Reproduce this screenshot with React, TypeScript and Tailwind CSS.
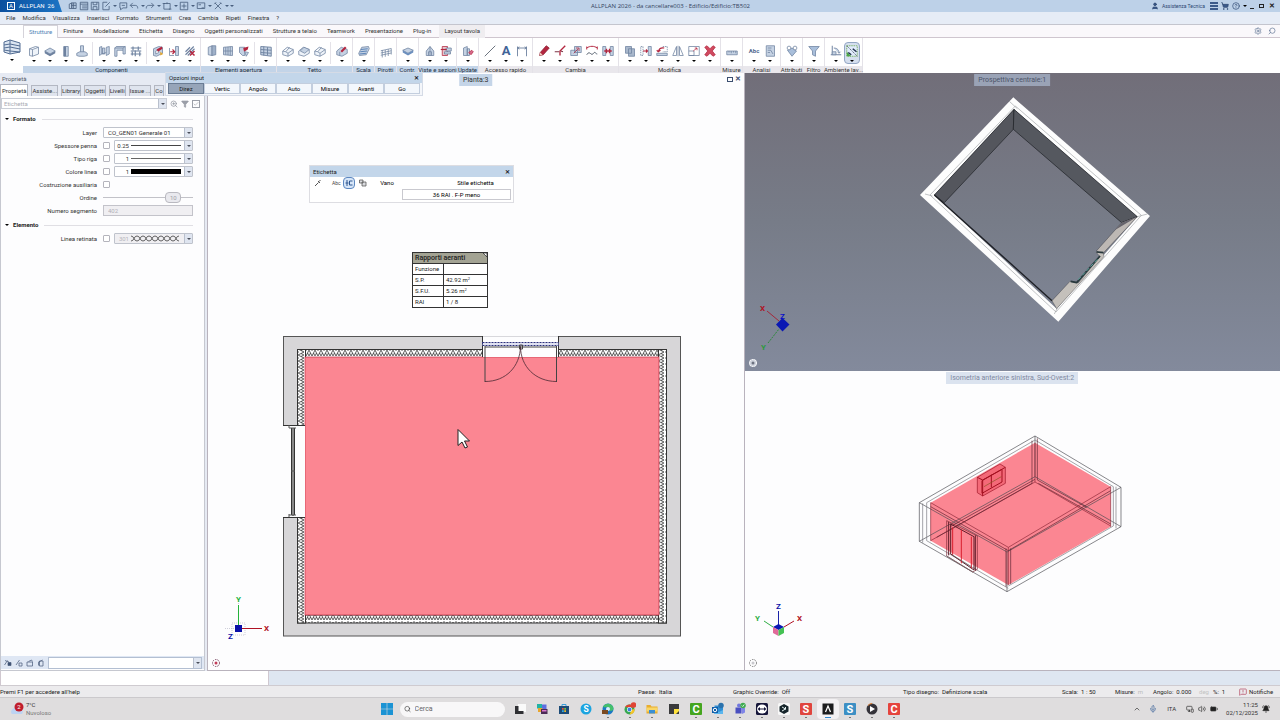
import type { ReactNode } from 'react';
import { useState } from 'react';
import { Search, Settings, Filter, ZoomIn, ShoppingCart, User, CircleHelp, ChevronUp, Mic, Volume2, MonitorSmartphone, BatteryMedium, BellRing, Check, MessageSquareWarning } from 'lucide-react';

const S = '#6d819f';
const L = '#c5d2e3';
const R = '#b3263f';

// 16x16 ribbon glyphs
const glyphs: Record<string, ReactNode> = {
    wall: <path d="M2 5l8-3 4 1v9l-8 3-4-1zM2 5l4 1 8-3M6 6v9" fill="#eef3f9" stroke={S} />,
    slab: (
        <>
            <path d="M1 8l7-4 7 4-7 4z" fill={L} stroke={S} />
            <path d="M1 8v3l7 4 7-4V8l-7 4z" fill={S} />
        </>
    ),
    column: (
        <>
            <path d="M5 2h6v13H5z" fill={L} stroke={S} />
            <path d="M5 2h3v13H5z" fill={S} />
        </>
    ),
    footing: (
        <>
            <path d="M6 1h4v9H6z" fill={L} stroke={S} />
            <path d="M1 11l4-2h7l3 2v3l-4 1H4l-3-1z" fill={L} stroke={S} />
        </>
    ),
    walls: (
        <>
            <path d="M2 3l3-1v10l-3 2zM6 4h3v8H6zM11 3l4-1v10l-4 2z" fill={L} stroke={S} />
            <path d="M5 12l6-2" stroke={S} />
        </>
    ),
    beam: <path d="M1 4l2-2h12v10h-3V7H4v8H1zM1 4h11v3M12 4l3-2" fill={L} stroke={S} />,
    grid: <path d="M1 4h14M1 8h14M1 12h14M4 2v5M11 2v5M7 7v8M13 9v6M3 9v5" stroke={S} strokeWidth="1.5" fill="none" />,
    opening: (
        <>
            <path d="M2 5l7-3 5 1v8l-8 4-4-1z" fill={L} stroke={S} />
            <path d="M5 8l4-2v4l-4 2z" fill="#fff" stroke={S} />
            <path d="M6 6l7-4 1 3-6 4z" fill={R} />
            <path d="M11 9l4 3-4 2z" fill="#e3a72f" />
        </>
    ),
    join: (
        <>
            <path d="M10 2h4v12h-4z" fill={L} stroke={S} />
            <path d="M2 4v10M2 14h6" stroke={S} fill="none" />
            <path d="M3 9h6M6 6l3 3-3 3" stroke={R} strokeWidth="1.5" fill="none" />
        </>
    ),
    unjoin: (
        <>
            <path d="M2 13L13 2M5 14l9-9M2 9l6-6" stroke={S} strokeWidth="1.5" />
            <path d="M8 8l6 6M14 8l-6 6" stroke={R} strokeWidth="2" />
        </>
    ),
    door: (
        <>
            <path d="M3 3l5-2v13l-5-1z" fill={L} stroke={S} />
            <path d="M8 1h5v12l-5 1z" fill="#9fb1c9" stroke={S} />
        </>
    ),
    window: <path d="M2 3l12-1v12L2 13zM8 2.500v11M2 8h12M5 3v10M11 2v12" fill={L} stroke={S} />,
    skylight: (
        <>
            <path d="M2 3h7v11H6L2 10z" fill={L} stroke={S} />
            <path d="M7 4l7-2-1 4-5 3z" fill={R} />
            <path d="M9 9l5 1-3 5z" fill={L} stroke={S} />
        </>
    ),
    facade: <path d="M1 2l14 1v12L1 13zM5 2v12M10 3v11M1 6l14 1M1 10l14 1" fill={L} stroke={S} strokeWidth="1.200" />,
    roof: <path d="M1 8l6-5 8 3v5l-7 4-7-2zM1 8l4 1 5-6M5 9l3 2v4M8 11l7-5" fill="#eef3f9" stroke={S} />,
    roofFill: (
        <>
            <path d="M1 8l6-5 8 3v5l-7 4-7-2z" fill="#eef3f9" stroke={S} />
            <path d="M3 8l5-5 7 3-6 5z" fill={L} stroke={S} />
        </>
    ),
    roofEdit: (
        <>
            <path d="M1 8l6-5 8 3v5l-7 4-7-2zM5 9v5" fill={L} stroke={S} />
            <path d="M6 8l6-6 2 2-6 6z" fill={R} />
        </>
    ),
    stair: (
        <>
            <path d="M5 3l9-1 1 3-4 8-9 1-1-3z" fill={L} stroke={S} />
            <path d="M4 6l9-1M3 9l9-1M2 12l9-1" stroke="#5e86b8" strokeWidth="1.500" />
        </>
    ),
    railing: <path d="M1 5l14-3M1 8l14-3M1 11l14-3M3 4v10M7 4v9M11 3v9M15 2v8" stroke={S} fill="none" />,
    solid: (
        <>
            <path d="M1 7l7-3 7 3-7 4z" fill={L} stroke={S} />
            <path d="M1 7v3l7 4 7-4V7l-7 4z" fill="#6c8fbe" />
        </>
    ),
    view: (
        <>
            <path d="M3 8l5-6 5 6v6H3z" fill={L} stroke={S} />
            <path d="M8 2v12M6 14V9h4v5" stroke={S} fill="none" />
        </>
    ),
    section: (
        <>
            <path d="M3 2h7v12H3z" fill="#e6c4cb" stroke={R} />
            <path d="M8 4h7v4H8zM6 9h8v3H6z" fill={L} stroke={S} />
            <path d="M1 6h8" stroke={R} strokeWidth="1.500" />
        </>
    ),
    update: (
        <>
            <path d="M2 4l5-2v12H2zM7 5h3v9H7z" fill={L} stroke={S} />
            <path d="M9 10l4-3 2 2-3 4z" fill="#d4688b" stroke={R} />
        </>
    ),
    line: <path d="M1 15L15 1" stroke="#5c6572" strokeWidth="1.200" />,
    dimension: <path d="M2 2v13M14 2v13M2 4h12M4.500 2.500L2 4l2.500 1.500M11.500 2.500L14 4l-2.500 1.500" stroke={S} fill="none" strokeWidth="1.200" />,
    pencil: (
        <>
            <path d="M3 10l8-9 4 3-8 9-5 1z" fill={R} stroke="#8a1c30" />
            <path d="M2 14l1-4 3 3z" fill="#f0d2c0" />
        </>
    ),
    trim: (
        <>
            <path d="M15 1L8 8v6" stroke={R} strokeWidth="1.800" fill="none" />
            <path d="M1 9h6M9 8l3 1" stroke="#7d3446" strokeWidth="1.500" />
        </>
    ),
    stretch: (
        <>
            <path d="M1 7h9v7H1zM6 2h9v8H6z" fill={L} stroke={S} />
            <path d="M5 11l6-6M8 4h4v4" stroke={R} fill="none" />
        </>
    ),
    curve: (
        <>
            <path d="M1 4c4-3 10-3 14 0M1 2v4M15 2v4" stroke={R} fill="none" strokeWidth="1.300" />
            <path d="M1 13c4-7 6 3 9-2 2-3 3 1 5 1" stroke="#4f5967" fill="none" strokeWidth="1.300" />
        </>
    ),
    merge: (
        <>
            <path d="M1 2h4v12H1zM11 2h4v12h-4z" fill={L} stroke={S} />
            <path d="M3 8h10M6 5v6M10 5v6" stroke={R} strokeWidth="1.800" />
        </>
    ),
    copy: <path d="M2 2h8v9H2zM6 5h8v10H6z" fill="#a9b8cc" stroke={S} />,
    move: (
        <>
            <path d="M1 2h3v12H1z" fill="none" stroke={S} strokeDasharray="2 1" />
            <path d="M11 2h4v12h-4z" fill={L} stroke={S} />
            <path d="M4 8h6M8 6l2 2-2 2" stroke={R} strokeWidth="1.500" fill="none" />
        </>
    ),
    rotate: (
        <>
            <path d="M1 11h14v3H1z" fill={L} stroke={S} />
            <path d="M9 2h6v7H9" fill="none" stroke={S} strokeDasharray="2 1" />
            <path d="M11 4C6 3 4 5 3 9M1 7l2 2 3-2" stroke={R} strokeWidth="1.500" fill="none" />
        </>
    ),
    mirror: <path d="M6 2v12H1zM10 2v12h5zM8 1v14" fill="none" stroke={S} />,
    scale: (
        <>
            <path d="M1 2h14v12H1zM1 8h7v6H1" fill="#fff" stroke={S} />
            <path d="M7 8l5-4M9 4h3v3" stroke={R} fill="none" />
        </>
    ),
    delete: <path d="M1 3l3-2 4 4 4-4 3 2-4 5 4 5-3 2-4-4-4 4-3-2 4-5z" fill="#d04a5f" stroke={R} />,
    ruler: <path d="M1 8h14v5H1zM4 8v2M7 8v3M10 8v2M13 8v3" fill={L} stroke={S} />,
    report: (
        <>
            <path d="M3 1h11v14H3z" fill={L} stroke={S} />
            <path d="M5 4h5M5 7h4l3 5M5 10h3" stroke={S} fill="none" />
        </>
    ),
    attributes: (
        <>
            <path d="M2 7l6-3 6 4-6 7z" fill="#a9bfdb" stroke={S} />
            <circle cx="4" cy="4" r="2.500" fill="#fff" stroke={S} />
            <circle cx="12" cy="4" r="2.500" fill="#fff" stroke={S} />
        </>
    ),
    filter: <path d="M1 2h14L10 8v7l-4-2V8z" fill="#a9bfdb" stroke={S} />,
    plane: (
        <>
            <path d="M3 1v12h12M3 13h-2" stroke={S} fill="none" strokeWidth="1.300" />
            <path d="M5 4c5 0 7 3 7 7M10 9l2 2 2-2M3 13h5V9H3z" stroke={S} fill={L} />
        </>
    ),
    xray: (
        <>
            <path d="M1 1h14v14H1z" fill="#dfeafb" stroke="#68a84a" strokeDasharray="2 1" />
            <path d="M1 1l14 14" stroke="#3c4656" strokeDasharray="2 1" />
            <path d="M1 9l6 6H1z" fill="#4ba546" />
            <path d="M9 5l5 4M3 10l4 3" stroke="#22324e" strokeWidth="2" />
        </>
    ),
};

function Glyph({ name, className = 'h-3 w-3.5' }: { name: string; className?: string }) {
    if (name === 'text') return <span className="h-3 text-[13px] leading-3 font-bold text-[#3f6498]">A</span>;
    if (name === 'abc') return <span className="h-3 text-[6px] leading-3 font-bold text-[#51698f]">Abc</span>;
    return (
        <svg viewBox="0 0 16 16" fill="none" className={className}>
            {glyphs[name]}
        </svg>
    );
}

function Caret({ className = 'fill-black' }: { className?: string }) {
    return (
        <svg viewBox="0 0 4 2" className={`h-[2px] w-1 shrink-0 ${className}`}>
            <path d="M0 0h4L2 2z" />
        </svg>
    );
}

type Group = { label: string; blue?: boolean; noCaret?: boolean; tools: string[] };

const groups: Group[] = [
    { label: 'Componenti', blue: true, tools: ['wall', 'slab', 'column', 'footing', '|', 'walls', 'beam', 'grid', '|', 'opening', 'join', 'unjoin'] },
    { label: 'Elementi apertura', blue: true, tools: ['door', 'window', 'skylight', '|', 'facade'] },
    { label: 'Tetto', blue: true, tools: ['roof', 'roofFill', 'roof', '|', 'roofEdit'] },
    { label: 'Scala', blue: true, tools: ['stair'] },
    { label: 'Pirotti', blue: true, noCaret: true, tools: ['railing'] },
    { label: 'Contr.', blue: true, tools: ['solid'] },
    { label: 'Viste e sezioni', blue: true, tools: ['view', 'section'] },
    { label: 'Update', blue: true, tools: ['update'] },
    { label: 'Accesso rapido', tools: ['line', 'text', 'dimension'] },
    { label: 'Cambia', tools: ['pencil', 'trim', 'stretch', 'curve', 'merge'] },
    { label: 'Modifica', tools: ['copy', 'move', 'rotate', 'mirror', 'scale', 'delete'] },
    { label: 'Misure', tools: ['ruler'] },
    { label: 'Analisi', tools: ['abc', 'report'] },
    { label: 'Attributi', tools: ['attributes'] },
    { label: 'Filtro', tools: ['filter'] },
    { label: 'Ambiente lav...', tools: ['plane', 'xray'] },
];

const quickIcons: { d: string; caret?: boolean }[] = [
    { d: 'M2 5l4-2v9H2zM6 3h7v9H6zM9 3v9M6 7h7' },
    { d: 'M2 2h12v12H2zM2 5h12M5 8h8M5 11h8' },
    { d: 'M2 2h12v12H2zM5 2v4h6V2M5 14V9h6v5' },
    { d: 'M10 2H3v12h10V8M7 9l7-7', caret: true },
    { d: 'M3 3h11v8H8l-4 3v-3H3zM6 7h5' },
    { d: 'M6 3L2 7l4 4M2 7h8c3 0 4 2 4 5', caret: true },
    { d: 'M10 3l4 4-4 4M14 7H6c-3 0-4 2-4 5', caret: true },
    { d: 'M3 4h10v9H3zM1 4h4M11 13h4M8 2v3', caret: true },
    { d: 'M2 2h12v12H2zM8 4v8M4 8h8', caret: true },
    { d: 'M2 3h12v9H2zM4 6h4M9 11h4', caret: true },
    { d: 'M3 3l10 10M13 3L3 13M2 5l3-3M11 2l3 3', caret: true },
];

function TitleBar() {
    return (
        <header className="flex h-3 items-center bg-[#bdd1e8]">
            <div className="flex h-3 w-[62px] items-center gap-1 bg-gradient-to-r from-[#0b4f9e] to-[#1c74c4] pl-[7px] leading-3 text-white [clip-path:polygon(0_0,58px_0,100%_100%,0_100%)]">
                <span className="flex h-2 w-2 items-center justify-center border border-white text-[6px] leading-none">A</span>
                <span>ALLPLAN&nbsp; 26</span>
            </div>
            <div className="ml-1.5 flex w-[166px] items-center justify-between">
                {quickIcons.map((icon, i) => (
                    <button key={i} aria-label={`Comando rapido ${i + 1}`} className="flex items-center gap-0.5">
                        <svg viewBox="0 0 16 16" fill="none" stroke="#4a607f" strokeWidth="1.300" className="h-2.5 w-2.5">
                            <path d={icon.d} />
                        </svg>
                        {icon.caret && <Caret className="fill-[#4a607f]" />}
                    </button>
                ))}
                <Caret className="fill-[#4a607f]" />
            </div>
            <h1 className="flex-1 pr-11 text-center font-['Open_Sans',sans-serif] text-[#33435c]">ALLPLAN 2026 - da cancellare003 - Edificio/Edificio:TB502</h1>
            <div className="flex w-[129px] items-center gap-[3px] whitespace-nowrap text-[#2c4570]">
                <User className="h-2 w-2 shrink-0 fill-[#3c5a8a]" />
                <span className="w-[45px] text-[5px]">Assistenza Tecnica</span>
                <svg viewBox="0 0 8 8" className="h-2 w-2 shrink-0 fill-[#3c5a8a]">
                    <path d="M0 0h8v2H0zM0 3h8v2H0zM0 6h8v2H0z" />
                </svg>
                <ShoppingCart className="h-2 w-2 shrink-0 fill-[#3c5a8a]" />
                <CircleHelp className="h-2 w-2 shrink-0" />
                <Caret />
                <button aria-label="Riduci a icona" className="mt-1 h-px w-1 bg-[#222]" />
                <button aria-label="Ripristina" className="ml-0.5 h-1 w-[5px] border border-[#222]" />
                <button aria-label="Chiudi" className="ml-0.5 text-[7px] leading-3 font-bold text-[#222]">
                    ✕
                </button>
            </div>
        </header>
    );
}

const menus = ['File', 'Modifica', 'Visualizza', 'Inserisci', 'Formato', 'Strumenti', 'Crea', 'Cambia', 'Ripeti', 'Finestra', '?'];
const ribbonTabs = ['Strutture', 'Finiture', 'Modellazione', 'Etichetta', 'Disegno', 'Oggetti personalizzati', 'Strutture a telaio', 'Teamwork', 'Presentazione', 'Plug-in', 'Layout tavola'];

function Ribbon() {
    const [active, setActive] = useState('Strutture');
    return (
        <div className="flex h-[49px] border-t border-[#c4c5ce] bg-white">
            <button aria-label="Ruoli" className="flex w-[23px] flex-col items-center gap-1 pt-3.5">
                <svg viewBox="0 0 18 16" className="h-4 w-[18px]" fill="#dbe5f1" stroke="#536d93">
                    <path d="M1 3l6-2 10 3v9l-10 2-6-2zM7 1v14M1 6l6-1 10 2M1 9l6-1 10 2M1 11l6 1 10 1" />
                </svg>
                <Caret />
            </button>
            <div className="flex min-w-0 flex-1 flex-col">
                <div className="flex h-[13px] items-center border-b border-[#cfc6cf] bg-[#faf8fb]">
                    {ribbonTabs.map((tab) => (
                        <button
                            key={tab}
                            onClick={() => setActive(tab)}
                            className={`h-[13px] px-[5px] ${
                                tab === active
                                    ? 'border-x border-t border-[#d5d3da] bg-white text-[#4f83b5]'
                                    : tab === 'Layout tavola'
                                      ? 'ml-[3px] bg-[#efedf0] text-[#333]'
                                      : 'text-[#333]'
                            }`}
                        >
                            {tab}
                        </button>
                    ))}
                    <div className="mr-1 ml-auto flex gap-1.5">
                        <Settings className="h-2 w-2 text-[#5e7392]" />
                        <Search className="h-2 w-2 -scale-x-100 text-[#5e7392]" />
                    </div>
                </div>
                <div className="flex">
                    {groups.map((g) => (
                        <section key={g.label} className="border-r border-[#e4e2e8]">
                            <div className="flex h-7 items-start pt-1 pr-0.5 pl-[3px]">
                                {g.tools.map((t, i) =>
                                    t === '|' ? (
                                        <span key={i} className="mr-[3px] ml-0.5 h-[22px] w-px bg-[#e4e2e8]" />
                                    ) : (
                                        <button
                                            key={i}
                                            aria-label={`${g.label} ${t}`}
                                            className={`flex h-[22px] w-4 flex-col items-center justify-center gap-[3px] ${
                                                t === 'xray' ? 'rounded-sm border border-[#93a6c4] bg-[#d5dfee]' : ''
                                            }`}
                                        >
                                            <Glyph name={t} />
                                            {!g.noCaret && <Caret />}
                                        </button>
                                    )
                                )}
                            </div>
                            <p
                                className={`flex h-[7px] w-0 min-w-full justify-center leading-[8px] whitespace-nowrap ${
                                    g.blue ? 'bg-[#c3d4e8] text-[#222f44]' : 'bg-[#e9e7ec] text-[#333]'
                                }`}
                            >
                                {g.label}
                            </p>
                        </section>
                    ))}
                </div>
            </div>
        </div>
    );
}

function ArrowBox() {
    return (
        <span className="pointer-events-none flex w-2 shrink-0 items-center justify-center self-stretch border-l border-[#b9c0cd] bg-[#dfe5f0]">
            <Caret className="fill-[#4a4f5a]" />
        </span>
    );
}

function SectionTitle({ children }: { children: ReactNode }) {
    return (
        <h3 className="flex h-[14px] items-center gap-1 pl-1 font-bold text-[#222]">
            <Caret />
            {children}
            <span className="ml-0.5 h-px flex-1 bg-[#e0dfe4]" />
        </h3>
    );
}

function Row({ id, label, check, children }: { id: string; label: string; check?: boolean; children?: ReactNode }) {
    return (
        <div className="flex h-[13px] items-center">
            <label htmlFor={id} className="w-[97px] shrink-0 pr-px text-right">
                {label}
            </label>
            <div className="ml-[5px] flex min-w-0 flex-1 items-center gap-1">
                {check && (
                    <input
                        id={children ? `${id}-on` : id}
                        aria-label={children ? `${label} attivo` : undefined}
                        type="checkbox"
                        className="h-[7px] w-[7px] appearance-none rounded-[1px] border border-[#b4b4bc] bg-white"
                    />
                )}
                {children}
            </div>
        </div>
    );
}

function LineSelect({ id, value, disabled, children }: { id: string; value: string; disabled?: boolean; children?: ReactNode }) {
    return (
        <div className={`flex h-[11px] flex-1 items-center rounded-[1px] border border-[#bfc3cc] ${disabled ? 'bg-[#f0eff2] text-[#b5b5bb]' : 'bg-white'}`}>
            <select
                id={id}
                disabled={disabled}
                className={`h-full appearance-none bg-transparent ${children ? 'w-4 pr-0.5 text-right' : 'w-full pl-1'}`}
            >
                <option>{value}</option>
            </select>
            {children && <span className="flex flex-1 items-center pr-[3px]">{children}</span>}
            <ArrowBox />
        </div>
    );
}

const panelTabs = ['Proprietà', 'Assiste...', 'Library', 'Oggetti', 'Livelli', 'Issue ...', 'Co'];

function PropertiesPanel() {
    return (
        <aside className="flex w-[207px] shrink-0 flex-col bg-[#e6eaf3] pr-0.5 text-[#333]">
            <h2 className="h-[11px] pl-0.5 leading-[11px] text-[#555b68]">Proprietà</h2>
            <div role="tablist" className="flex h-3 items-end gap-[3px] overflow-hidden">
                {panelTabs.map((tab, i) => (
                    <button
                        key={tab}
                        role="tab"
                        aria-selected={i === 0}
                        className={`shrink-0 border border-b-0 border-[#b3b7c2] ${i === 0 ? 'h-3 bg-white px-px' : 'h-[11px] bg-[#dfe4ee]'}`}
                    >
                        {tab}
                    </button>
                ))}
            </div>
            <div className="flex flex-1 flex-col border-x border-b border-[#c6c8d0] bg-[#fdfdfe]">
                <div className="mt-0.5 flex items-center gap-[3px]">
                    <div className="flex h-[11px] w-[166px] items-center border border-[#c9cdd6] bg-white">
                        <input aria-label="Elemento" defaultValue="Etichetta" className="w-full min-w-0 pl-0.5 text-[#a9abb3] outline-none" />
                        <ArrowBox />
                    </div>
                    <ZoomIn className="h-2 w-2 text-[#8a8e98]" />
                    <Filter className="h-2 w-2 fill-[#9b9fa8] text-[#9b9fa8]" />
                    <Check className="h-2 w-2 border border-[#9b9fa8] text-[#8a8e98]" />
                </div>
                <form className="mt-[3px] mr-[11px] flex flex-col">
                    <SectionTitle>Formato</SectionTitle>
                    <Row id="layer" label="Layer">
                        <LineSelect id="layer" value="CO_GEN01   Generale 01" />
                    </Row>
                    <Row id="pen" label="Spessore penna" check>
                        <LineSelect id="pen" value="0.25">
                            <span className="h-px flex-1 bg-[#444]" />
                        </LineSelect>
                    </Row>
                    <Row id="line" label="Tipo riga" check>
                        <LineSelect id="line" value="1">
                            <span className="h-px flex-1 bg-[#666]" />
                        </LineSelect>
                    </Row>
                    <Row id="color" label="Colore linea" check>
                        <LineSelect id="color" value="1">
                            <span className="h-[5px] flex-1 bg-black" />
                        </LineSelect>
                    </Row>
                    <Row id="aux" label="Costruzione ausiliaria" check />
                    <Row id="order" label="Ordine">
                        <input
                            id="order"
                            type="range"
                            min={0}
                            max={12}
                            defaultValue={10}
                            className="h-[11px] w-full min-w-0 appearance-none bg-[linear-gradient(#c2c2c8,#c2c2c8)] bg-[length:100%_1px] bg-center bg-no-repeat [&::-webkit-slider-thumb]:h-[11px] [&::-webkit-slider-thumb]:w-4 [&::-webkit-slider-thumb]:appearance-none [&::-webkit-slider-thumb]:rounded-sm [&::-webkit-slider-thumb]:border [&::-webkit-slider-thumb]:border-[#b9b9c0] [&::-webkit-slider-thumb]:bg-[#e9e9ee]"
                        />
                        <output htmlFor="order" className="pointer-events-none absolute ml-[67px] text-[#a0a0a8]">
                            10
                        </output>
                    </Row>
                    <Row id="segment" label="Numero segmento">
                        <input id="segment" disabled defaultValue="402" className="h-[11px] w-full border border-[#c3c3ca] bg-[#f0eff2] pl-1 text-[#b0b0b8]" />
                    </Row>
                    <div className="mt-px">
                        <SectionTitle>Elemento</SectionTitle>
                    </div>
                    <Row id="hatch" label="Linea retinata" check>
                        <LineSelect id="hatch" value="301" disabled>
                            <svg className="h-[7px] flex-1" viewBox="0 0 50 7" preserveAspectRatio="none" fill="none" stroke="#3c3c3c" strokeWidth="0.800">
                                <path d="M0 1q2 0 3 2.500t3 2.500 3-2.500 3-2.500 3 2.500 3 2.500 3-2.500 3-2.500 3 2.500 3 2.500 3-2.500 3-2.500 3 2.500 3 2.500 3-2.500 3-2.500" />
                                <path d="M0 6q2 0 3-2.500t3-2.500 3 2.500 3 2.500 3-2.500 3-2.500 3 2.500 3 2.500 3-2.500 3-2.500 3 2.500 3 2.500 3-2.500 3-2.500 3 2.500 3 2.500" />
                            </svg>
                        </LineSelect>
                    </Row>
                </form>
                <div className="mt-auto mb-px flex h-[13px] items-center gap-[3px] bg-[#dfe7f4] pr-0.5 pl-[3px]">
                    {['M2 3l8 3M8 7h6v6H8zM1 12l6-9', 'M2 12L9 2M8 8h6v6H8z', 'M2 6h11v8H2zM5 5l6-3 2 3', 'M5 4h7v10H5zM2 7l9-5M3 7v6'].map((d, i) => (
                        <button key={d} aria-label={`Preferiti ${i + 1}`}>
                            <svg viewBox="0 0 16 16" className="h-2 w-2" fill={i === 0 ? '#3b4f70' : 'none'} stroke="#4d5f7d" strokeWidth="1.500">
                                <path d={d} />
                            </svg>
                        </button>
                    ))}
                    <div className="flex h-3 flex-1 items-center border border-[#b3bfd2] bg-white">
                        <input aria-label="Filtro favoriti" className="w-full min-w-0 outline-none" />
                        <ArrowBox />
                    </div>
                </div>
            </div>
        </aside>
    );
}

function Hatch({ id, vertical }: { id: string; vertical?: boolean }) {
    return (
        <pattern id={id} width={vertical ? 8 : 6} height={vertical ? 6 : 8} patternUnits="userSpaceOnUse" x="297" y="349">
            <rect width="8" height="8" fill="#fff" />
            <path
                d={vertical ? 'M1 0L7 3L1 6M7 0L4 1.500M7 6L4 4.500M0 3h2' : 'M0 1L3 7L6 1M0 7L1.500 4M6 7L4.500 4M3 0v2'}
                fill="none"
                stroke="#333"
                strokeWidth="0.800"
            />
        </pattern>
    );
}

function AxisLabel({ x, y, fill, children }: { x: number; y: number; fill: string; children: string }) {
    return (
        <text x={x} y={y} fill={fill} className="text-[8px] font-bold">
            {children}
        </text>
    );
}

function Target({ x, y, stroke, fill }: { x: number; y: number; stroke: string; fill: string }) {
    return (
        <g strokeWidth="1">
            <circle cx={x} cy={y} r="3.500" fill="none" stroke={stroke} strokeDasharray="1.500 1" />
            <circle cx={x} cy={y} r="1.500" fill={fill} stroke="none" />
        </g>
    );
}

function FloorPlan() {
    return (
        <svg className="absolute inset-0 h-full w-full" aria-label="Pianta">
            <defs>
                <Hatch id="hatch-h" />
                <Hatch id="hatch-v" vertical />
            </defs>
            <g transform="translate(-208 -73)" fill="none" stroke="#333" strokeWidth="1">
                <rect x="283.500" y="336.500" width="397" height="299.500" fill="#d7d6d8" stroke="#555" />
                <rect x="297.500" y="349.500" width="369" height="8" fill="url(#hatch-h)" stroke="#333" />
                <rect x="297.500" y="615" width="369" height="8" fill="url(#hatch-h)" stroke="#333" />
                <rect x="297.500" y="349.500" width="8" height="273.500" fill="url(#hatch-v)" stroke="#333" />
                <rect x="658.500" y="349.500" width="8" height="273.500" fill="url(#hatch-v)" stroke="#333" />
                <rect x="305" y="357" width="354" height="258" fill="#fb8692" stroke="#c22f44" strokeWidth="0.700" />

                {/* door */}
                <rect x="482.500" y="335.500" width="76" height="21.500" fill="#fdfdfe" stroke="none" />
                <path d="M482.500 336v21M558.500 336v21" />
                <path d="M483 336.500h75" stroke="#d8d8dc" />
                <rect x="482.500" y="342.500" width="76" height="3" fill="#dfe1f2" stroke="#2a2f7a" strokeDasharray="2 1" />
                <path d="M485 347h72M485 346v36M556.500 346v36M519.500 345h3v4h-3z" stroke="#444" />
                <path d="M485 381.500c21 0 35-15 35.500-35c0 20 15 35 36 35" stroke="#4a2a34" strokeWidth="0.800" />

                {/* window */}
                <rect x="282.500" y="425" width="22.500" height="92" fill="#fdfdfe" stroke="none" />
                <path d="M283 425.500h22M283 517.500h22M291.500 428v87M294.500 428v87" />
                <path d="M293 428v88" stroke="#888" strokeWidth="2" />
                <path d="M289 428h7M289 515h7M289 425v3M289 517v-3M291 471h4" stroke="#555" />

                {/* axes */}
                <path d="M225 628.500h32M238.500 601v27M232 623h13v12h-13z" stroke="#b9b9c8" strokeWidth="0.700" strokeDasharray="1 1" />
                <path d="M238.500 605v20" stroke="#25b33c" />
                <path d="M242 628.500h20" stroke="#b01224" />
                <rect x="235" y="625" width="7" height="7" fill="#0a10a8" stroke="none" />
                <g stroke="none">
                    <AxisLabel x={236} y={602} fill="#25b33c">Y</AxisLabel>
                    <AxisLabel x={264} y={631} fill="#b01224">X</AxisLabel>
                    <AxisLabel x={228} y={639} fill="#0a10a8">Z</AxisLabel>
                </g>
                <Target x={216} y={663} stroke="#7a4a62" fill="#c33d5a" />
            </g>
            <path d="M250 356.500v16l4-3.500 3 6 2.500-1-3-6h5z" fill="#fff" stroke="#222" strokeWidth="1" />
        </svg>
    );
}

// Coordinates are tripled to keep the vertices on whole numbers
function PerspectiveRoom() {
    return (
        <svg className="absolute inset-0 h-full w-full" aria-label="Prospettiva">
            <g transform="translate(155 17) scale(0.33333)" strokeWidth="2" stroke="#1d1f24" strokeLinejoin="round">
                <path d="M340 22L750 378L475 695L60 315ZM342 58L103 315L470 656L712 380Z" fill="#fdfdfd" fillRule="evenodd" stroke="none" />
                <path d="M342 58L340 118L133 338L103 315Z" fill="#54565d" />
                <path d="M342 58L712 380L665 398L340 118Z" fill="#55585f" />
                <path d="M712 380L665 398L590 482L605 494Z" fill="#bdb8b4" strokeWidth="1" />
                <path d="M712 380L665 398L645 420Z" fill="#66646c" stroke="none" />
                <path d="M610 487L588 486L600 500L535 578L510 574L456 632L470 656L612 500Z" fill="#c4c0bb" strokeWidth="1" />
                <path d="M600 498L530 578L512 574M590 486l20 2" fill="none" strokeWidth="5" stroke="#28383c" />
                <path d="M592 508L532 572" stroke="#5aa59c" strokeWidth="3" strokeDasharray="12 6" />
                <path d="M103 315L456 632" strokeWidth="4" />
                <path d="M346 48L90 315L468 666L724 376ZM328 34L352 56M75 312l22 6M742 372l-30 8M463 672l10-20" fill="none" stroke="#a2a4a8" strokeWidth="2" />
            </g>
            <g transform="translate(-745 -73)">
                <path d="M767 311l12 10" stroke="#a3283a" />
                <path d="M768 343l11-14" stroke="#2d8a3c" strokeDasharray="2 1" />
                <path d="M782.500 318l7 6.500-7 7-6.500-7z" fill="#0a18b4" />
                <AxisLabel x={760} y={311} fill="#b01224">X</AxisLabel>
                <AxisLabel x={780} y={319} fill="#0a10c8">Z</AxisLabel>
                <AxisLabel x={761} y={350} fill="#2d9a3c">Y</AxisLabel>
                <circle cx="753" cy="363" r="4" fill="#cfd3dc" />
                <Target x={753} y={363} stroke="#ffffff" fill="#6d7280" />
            </g>
        </svg>
    );
}

function IsometricRoom() {
    return (
        <svg className="absolute inset-0 h-full w-full" aria-label="Isometria">
            <g transform="translate(155 49) scale(0.33333)" fill="none" stroke="#3a2a30" strokeWidth="2">
                <path d="M405 68L632 200V320L325 495L92 362V248Z" fill="#fb8692" stroke="none" />
                {/* outer shell */}
                <path d="M405 48L663 202V320L321 515L58 364V248Z" stroke="#4c4c52" />
                <path d="M58 248L321 396L663 202M321 396V515M405 48V170L663 320M405 170L58 364" stroke="#4c4c52" />
                <path d="M405 60L640 200V318L325 498M405 60L80 248V362L325 505M648 200V325M68 250V368" stroke="#77777d" />
                {/* inner edges */}
                <path d="M92 248L325 382L632 200M325 382V495M405 68V186L632 318M405 186L92 362M92 248V362M632 200V320" stroke="#8d2537" />
                <path d="M92 260L325 392L632 212M332 385V492M412 55V180L560 262M318 385V500M396 62V190L110 352M405 178L150 320M415 190L632 312" stroke="#5c2430" />
                {/* window */}
                <path d="M232 172L300 132L316 142V190L248 228L232 218Z" fill="#ee4c5e" fillOpacity="0.500" stroke="#9c1425" />
                <path d="M246 182L306 148V186L246 220ZM274 164V202M232 172L248 180L316 142M248 180V228" stroke="#a30f1f" strokeWidth="3" />
                <path d="M252 200L304 170" stroke="#8a5320" />
                {/* door */}
                <path d="M140 302L232 348V448L218 456L140 408Z" stroke="#7c2431" />
                <path d="M152 312L222 350V450L152 402ZM146 306V406M226 346V452" stroke="#5e1c28" strokeWidth="3" />
                <path d="M184 330V430M158 322V405M214 350V445" stroke="#d91f2e" strokeWidth="3" />
                <path d="M140 408L218 456M156 404L214 440" stroke="#6a6a6a" />
            </g>
            <g transform="translate(-745 -371)">
                <path d="M778.500 611v14" stroke="#1a22a8" />
                <path d="M764 621l9 6" stroke="#2fae44" />
                <path d="M784 627l10-6" stroke="#b01224" />
                <path d="M778.500 624l5.500 3-5.500 3-5.500-3z" fill="#0a18b4" />
                <path d="M773 627l5.500 3v6l-5.500-3z" fill="#e06a9a" />
                <path d="M784 627l-5.500 3v6l5.500-3z" fill="#45c254" />
                <AxisLabel x={776} y={609} fill="#0a10a8">Z</AxisLabel>
                <AxisLabel x={755} y={621} fill="#2fae44">Y</AxisLabel>
                <AxisLabel x={797} y={621} fill="#b01224">X</AxisLabel>
                <Target x={753} y={663} stroke="#777" fill="#c9c9ce" />
            </g>
        </svg>
    );
}

const ratios: [string, ReactNode][] = [
    ['Funzione', ''],
    ['S.P.', <>42.92 m<sup className="text-[4px]">2</sup></>],
    ['S.F.U.', <>5.26 m<sup className="text-[4px]">2</sup></>],
    ['RAI', '1 / 8'],
];

function RatioTable() {
    return (
        <table className="absolute top-[179px] left-[204px] w-[76px] border-collapse bg-white text-[#222] [&_td]:border [&_td]:border-[#333] [&_td]:p-0 [&_td]:pl-0.5">
            <thead>
                <tr className="h-[11px]">
                    <th colSpan={2} className="relative border border-[#333] bg-[#a3a393] p-0 pl-0.5 text-left text-[7px] leading-[10px] font-medium">
                        Rapporti aeranti
                        <svg viewBox="0 0 4 4" className="absolute top-0 right-0 h-1 w-1">
                            <path d="M0 0h4v4z" fill="#fff" stroke="#333" strokeWidth="0.800" />
                        </svg>
                    </th>
                </tr>
            </thead>
            <tbody>
                {ratios.map(([name, value]) => (
                    <tr key={name} className="h-[11px] leading-[10px]">
                        <td className="w-[31px]">{name}</td>
                        <td>{value}</td>
                    </tr>
                ))}
            </tbody>
        </table>
    );
}

function LabelDialog() {
    return (
        <div role="dialog" aria-label="Etichetta" className="absolute top-[92px] left-[101px] w-[205px] border border-[#dddde2] bg-white">
            <div className="flex h-[11px] items-center justify-between bg-[#c3d6ea] px-[3px] text-[#222]">
                <span>Etichetta</span>
                <button aria-label="Chiudi etichetta" className="font-bold">✕</button>
            </div>
            <div className="grid grid-cols-[62px_30px_1fr] items-center pb-0.5 text-center">
                <div className="flex h-3 items-center gap-0.5 pl-1">
                    <button aria-label="Pipetta">
                        <svg viewBox="0 0 16 16" className="h-2 w-2" fill="none" stroke="#555" strokeWidth="2">
                            <path d="M2 14L9 7M8 4l4 4M10 5l3-3" />
                        </svg>
                    </button>
                    <button className="ml-2 text-[5px] text-[#444]">Abc</button>
                    <button aria-label="Etichetta" className="rounded-sm border border-[#5c87c0] bg-[#d7e6f8] p-px">
                        <svg viewBox="0 0 16 16" className="h-2 w-2" fill="none" stroke="#2f5791" strokeWidth="2">
                            <path d="M4 2v12M1 8h6M9 4h6M9 12h6M9 4v8" />
                        </svg>
                    </button>
                    <button aria-label="Attributo" className="ml-0.5">
                        <svg viewBox="0 0 16 16" className="h-2 w-2" fill="#d9dade" stroke="#555" strokeWidth="1.500">
                            <path d="M1 2h7v6H1zM6 6h8v8H6z" />
                        </svg>
                    </button>
                </div>
                <span>Vano</span>
                <span className="pl-9">Stile etichetta</span>
                <button className="col-start-3 mr-0.5 h-[11px] border border-[#c9c9cf]">36 RAI . F-P meno</button>
            </div>
        </div>
    );
}

const inputOptions = ['Direz', 'Vertic', 'Angolo', 'Auto', 'Misure', 'Avanti', 'Go'];

function InputOptions() {
    const [active, setActive] = useState('Direz');
    return (
        <div role="dialog" aria-label="Opzioni input" className="absolute top-[72px] left-[165px] z-10 w-[258px] border border-[#d5dbe6] bg-[#f4f6fa] pb-px">
            <div className="flex h-[10px] items-center justify-between bg-[#c3d6ea] px-[3px] text-[#222]">
                <span>Opzioni input</span>
                <button aria-label="Chiudi opzioni" className="font-bold">✕</button>
            </div>
            <div className="flex px-0.5">
                {inputOptions.map((o) => (
                    <button
                        key={o}
                        onClick={() => setActive(o)}
                        className={`h-[11px] flex-1 border ${o === active ? 'border-[#6a7c94] bg-[#96a5b9] text-[#222]' : 'border-[#c3cede] bg-[#f3f7fc]'}`}
                    >
                        {o}
                    </button>
                ))}
            </div>
        </div>
    );
}

function ViewTitle({ className, children }: { className: string; children: string }) {
    return <h2 className={`absolute top-px left-1/2 -translate-x-1/2 px-1 text-[7px] leading-[12px] whitespace-nowrap ${className}`}>{children}</h2>;
}

function Viewports() {
    return (
        <main className="flex min-w-0 flex-1">
            <section className="relative flex-1 border-x border-b border-[#b9b3bd] bg-[#fdfdfe]">
                <FloorPlan />
                <ViewTitle className="bg-[#c5d5e8] text-[#333]">Pianta:3</ViewTitle>
                <div className="absolute top-0.5 right-[3px] flex items-center gap-0.5 text-[#3c4f70]">
                    <button aria-label="Ingrandisci finestra" className="h-[5px] w-1.5 border border-[#3c4f70]" />
                    <button aria-label="Chiudi finestra" className="text-[7px] leading-[9px] font-bold">✕</button>
                </div>
                <LabelDialog />
                <RatioTable />
            </section>
            <div className="flex flex-1 flex-col">
                <section className="relative h-[298px] bg-gradient-to-b from-[#716e79] via-[#777c88] to-[#838a9c]">
                    <PerspectiveRoom />
                    <ViewTitle className="bg-[#9aa3b6] text-[#4c5468]">Prospettiva centrale:1</ViewTitle>
                </section>
                <section className="relative flex-1 border-b border-[#b9b3bd] bg-[#fdfdfe]">
                    <IsometricRoom />
                    <ViewTitle className="bg-[#dbe3ef] text-[#8088a0]">Isometria anteriore sinistra, Sud-Ovest:2</ViewTitle>
                </section>
            </div>
        </main>
    );
}

function StatusBar() {
    return (
        <footer className="flex h-3 items-center border-t border-[#cfcbd0] bg-[#ecebed] text-[#222]">
            <span className="flex-1">Premi F1 per accedere all'help</span>
            <span className="w-[95px]">Paese:&nbsp; Italia</span>
            <span className="w-[170px]">Graphic Override:&nbsp; Off</span>
            <span className="w-[159px]">Tipo disegno:&nbsp; Definizione scala</span>
            <span className="w-[53px]">Scala:&nbsp; 1 : 50</span>
            <span className="w-[38px]">
                Misure:&nbsp; <span className="text-[#bbb]">m</span>
            </span>
            <span className="w-[46px]">Angolo:&nbsp; 0.000</span>
            <span className="w-[14px] text-[#c3c3c3]">deg</span>
            <span className="w-[26px]">%:&nbsp; 1</span>
            <button className="flex w-[41px] items-center gap-0.5">
                <MessageSquareWarning className="h-2 w-2 text-[#b0405a]" />
                Notifiche
            </button>
        </footer>
    );
}

type AppEntry = { name: string; running?: boolean; icon: ReactNode };

function Tile({ fill, text }: { fill: string; text: string }) {
    return (
        <>
            <rect width="24" height="24" rx="2" fill={fill} />
            <text x="12" y="20" textAnchor="middle" fill="#fff" className="text-[22px] font-bold">
                {text}
            </text>
        </>
    );
}

const apps: AppEntry[] = [
    { name: 'Attività', icon: <><path d="M8 2h16v16H8z" fill="#fafafa" /><path d="M2 6h7v10h10v6H2z" fill="#2f2f33" /></> },
    { name: 'Foto', icon: <><path d="M2 2h10v9H2z" fill="#21b3a4" /><path d="M12 3h9v9h-9z" fill="#5d6ce0" /><path d="M4 10h9v8H4z" fill="#e9a52d" /><path d="M10 12h13v10H10z" fill="#4a2a55" /><path d="M12 14h9v3h-9z" fill="#d678cc" /></> },
    { name: 'Store', icon: <><path d="M2 6h20v16H2z" fill="#1d4b78" /><path d="M8 6V3h8v3" fill="none" stroke="#3c9fdc" strokeWidth="2" /><path d="M8 10h3.500v3.500H8z" fill="#e8553a" /><path d="M12.500 10H16v3.500h-3.500z" fill="#7cc043" /><path d="M8 14.500h3.500V18H8z" fill="#35a9e0" /><path d="M12.500 14.500H16V18h-3.500z" fill="#f3bb2a" /></> },
    { name: 'Skype', icon: <><circle cx="12" cy="12" r="11" fill="#1ba4e0" /><text x="12" y="18" textAnchor="middle" fill="#fff" className="text-[17px] font-bold">S</text></> },
    { name: 'Edge', running: true, icon: <><circle cx="12" cy="12" r="11" fill="#1b78c4" /><path d="M2 8C6-2 22 0 23 11c0 5-7 6-9 3 2-4-3-8-8-5z" fill="#45c06b" /><circle cx="12" cy="12" r="4" fill="#d9eefa" /><path d="M0 14h12v8H0z" fill="#7a4a22" /></> },
    { name: 'Chrome', running: true, icon: <><circle cx="11" cy="13" r="10" fill="#36a852" /><path d="M2 8a10 10 0 0 1 18 1H11z" fill="#e2412e" /><path d="M21 12c1 6-4 11-10 11l5-10z" fill="#f7c325" /><circle cx="11" cy="13" r="5" fill="#fff" /><circle cx="11" cy="13" r="3.800" fill="#3f7fe8" /><circle cx="19" cy="4" r="5.500" fill="#e04535" /></> },
    { name: 'Esplora file', running: true, icon: <><path d="M1 4h8l2 3h12v14H1z" fill="#e9ad2e" /><path d="M1 9h22v8H1z" fill="#f9d667" /><path d="M6 14h12v7H6z" fill="#3a8fd4" /></> },
    { name: 'Note', icon: <><path d="M2 2h20v20H2z" fill="#3a3a3c" /><path d="M22 12v4l-6 6h-4V12z" fill="#ffe23e" /></> },
    { name: 'Camtasia', running: true, icon: <Tile fill="#45a51f" text="C" /> },
    { name: 'Outlook', running: true, icon: <><path d="M5 5h17v17H5z" fill="#2f8fd6" /><path d="M5 14l9 4 8-4v8H5z" fill="#5bb6ee" /><path d="M0 8h12v12H0z" fill="#0f5da8" /><circle cx="6" cy="14" r="3.500" fill="none" stroke="#fff" strokeWidth="2" /><circle cx="18" cy="5" r="5.500" fill="#2b72ad" /></> },
    { name: 'Teams', running: true, icon: <><path d="M3 9h12v12H3z" fill="#4a4fc0" /><path d="M14 10h8v9l-6 3z" fill="#8085e8" /><circle cx="10" cy="5" r="4" fill="#7177dd" /><circle cx="18" cy="5" r="5.500" fill="#3fab4f" /><path d="M15.500 5l2 2 3-4" stroke="#fff" strokeWidth="1.500" fill="none" /></> },
    { name: 'TeamViewer', running: true, icon: <><rect width="24" height="24" rx="3" fill="#16163a" /><ellipse cx="12" cy="12" rx="10" ry="9" fill="#fff" /><path d="M3 12l5-4v3h8V8l5 4-5 4v-3H8v3z" fill="#16163a" /></> },
    { name: 'ChatGPT', running: true, icon: <><rect width="24" height="24" rx="3" fill="#f7f7f7" /><path d="M12 2l9 5v10l-9 5-9-5V7z" fill="#17262c" /><path d="M8 8l7 4-7 4M15 8v5" stroke="#e5f2f2" strokeWidth="2" fill="none" /></> },
    { name: 'Snagit', running: true, icon: <Tile fill="#e0453e" text="S" /> },
    { name: 'Allplan', running: true, icon: <><path d="M1 1h22v22H1z" fill="#1b1b1d" /><path d="M7 18l5-12 5 12" fill="none" stroke="#fff" strokeWidth="2.500" /></> },
    { name: 'Snagit Editor', running: true, icon: <Tile fill="#3c8fc4" text="S" /> },
    { name: 'Player', running: true, icon: <><circle cx="12" cy="12" r="11" fill="#35333a" /><path d="M4 5a11 11 0 0 1 8-4" stroke="#e07b2c" strokeWidth="2" fill="none" /><path d="M8 6l10 6-10 6z" fill="#fff" /></> },
    { name: 'Camtasia Rec', running: true, icon: <Tile fill="#e5443d" text="C" /> },
];

function Taskbar() {
    return (
        <nav className="grid h-[23px] grid-cols-[1fr_auto_1fr] items-center border-t border-[#cbc9cc] bg-[#dfddde] text-[#333]">
            <div className="flex items-center gap-0.5 pl-2.5">
                <svg viewBox="0 0 14 14" className="h-3.5 w-3.5">
                    <path d="M2 12a3 3 0 0 1 1-5 4 4 0 0 1 7 0 3 3 0 0 1 2 5z" fill="#bdd3f2" />
                    <circle cx="9" cy="5" r="4.500" fill="#c01d2c" />
                    <text x="9" y="7" textAnchor="middle" fill="#fff" className="text-[6px]">2</text>
                </svg>
                <p className="leading-2">
                    7°C
                    <br />
                    <span className="text-[#777]">Nuvoloso</span>
                </p>
            </div>
            <div className="flex items-center">
                <button aria-label="Start" className="flex w-[22px] justify-center">
                    <svg viewBox="0 0 12 12" className="h-3 w-3" fill="#1b93d4">
                        <path d="M0 0h5.700v5.700H0zM6.300 0H12v5.700H6.300zM0 6.300h5.700V12H0zM6.300 6.300H12V12H6.300z" />
                    </svg>
                </button>
                <label className="mr-1 ml-0.5 flex h-[15px] w-[105px] items-center gap-1 rounded-full bg-[#f8f7f8] px-1">
                    <Search className="h-2 w-2" />
                    <input aria-label="Cerca" placeholder="Cerca" className="w-full min-w-0 text-[7px] outline-none placeholder:text-[#666]" />
                </label>
                {apps.map((app) => (
                    <button
                        key={app.name}
                        aria-label={app.name}
                        className={`flex h-5 w-[22px] flex-col items-center justify-end gap-px pb-px ${app.name === 'Allplan' ? 'rounded-sm bg-[#f3f1f3]' : ''}`}
                    >
                        <svg viewBox="0 0 24 24" className="h-3.5 w-3">
                            {app.icon}
                        </svg>
                        <span className={`h-px ${app.name === 'Allplan' ? 'w-1.5 bg-[#2f86cf]' : app.running ? 'w-0.5 bg-[#777]' : 'w-0.5'}`} />
                    </button>
                ))}
            </div>
            <div className="flex items-center justify-end gap-2 pr-2.5">
                <ChevronUp className="h-2 w-2" />
                <Mic className="h-2 w-2 text-[#41669c]" />
                <span className="mx-0.5">ITA</span>
                <span className="flex gap-1">
                    <MonitorSmartphone className="h-2 w-2" />
                    <Volume2 className="h-2 w-2" />
                    <BatteryMedium className="h-2 w-2 fill-[#222]" />
                </span>
                <p className="text-right leading-2">
                    11:25
                    <br />
                    02/12/2025
                </p>
                <BellRing className="-ml-1 h-2 w-2 fill-[#222]" />
            </div>
        </nav>
    );
}

export default function App() {
    return (
        <div className="relative flex min-h-screen flex-col overflow-hidden bg-white font-['Roboto','Open_Sans',sans-serif] text-[6px] leading-[8px]">
            <TitleBar />
            <div className="flex h-3 items-center gap-[7px] bg-[#e6ecf6] pl-1.5 text-[#333]">
                {menus.map((m) => (
                    <button key={m}>{m}</button>
                ))}
            </div>
            <Ribbon />
            <InputOptions />
            <div className="flex flex-1">
                <PropertiesPanel />
                <Viewports />
            </div>
            <div className="flex h-[14px] bg-[#dee6f1]">
                <input aria-label="Riga di comando" className="w-[269px] border-x border-[#d0c8d0] bg-white outline-none" />
            </div>
            <StatusBar />
            <Taskbar />
        </div>
    );
}
